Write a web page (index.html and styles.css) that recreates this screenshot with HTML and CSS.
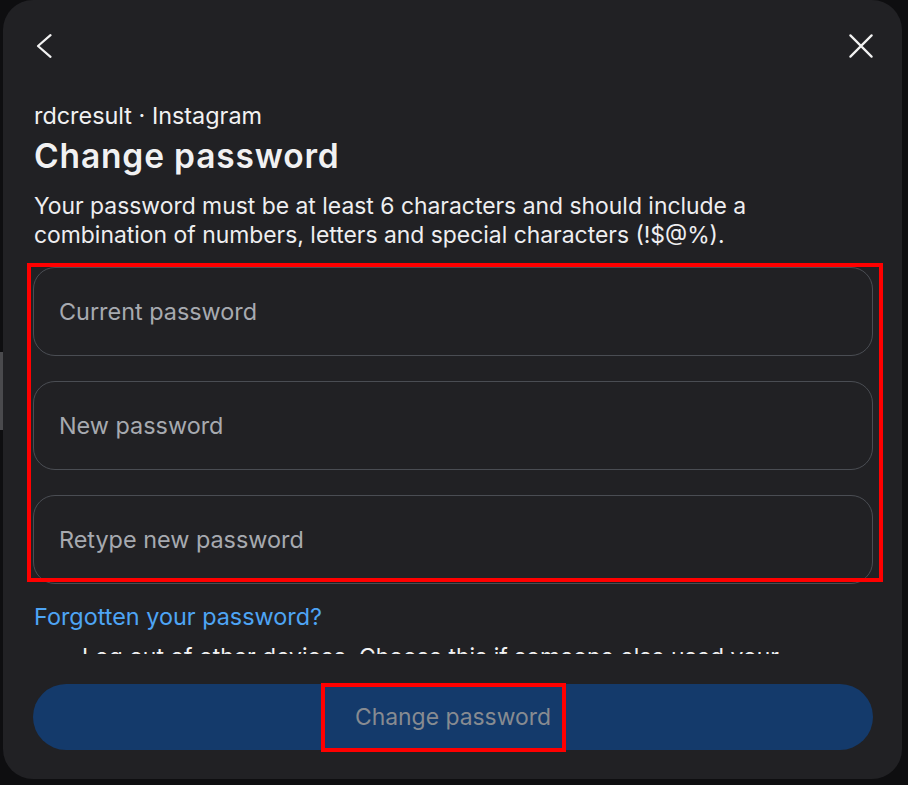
FILE: index.html
```html
<!DOCTYPE html>
<html lang="en">
<head>
<meta charset="utf-8">
<title>Change password</title>
<link rel="stylesheet" href="styles.css">
</head>
<body>
<div class="backdrop">
  <div class="scrollbar"></div>
  <div class="modal">
    <div class="header">
      <button class="icon-btn" aria-label="Back">
        <svg width="24" height="24" viewBox="0 0 24 24"><path d="M15.5 1.2 L3 12 L15.5 22.8" fill="none" stroke="#f2f2f2" stroke-width="2.2" stroke-linecap="round" stroke-linejoin="round"/></svg>
      </button>
      <button class="icon-btn" aria-label="Close">
        <svg width="24" height="24" viewBox="0 0 24 24"><path d="M1.4 1.4 L22.6 22.6 M22.6 1.4 L1.4 22.6" fill="none" stroke="#f2f2f2" stroke-width="2.2" stroke-linecap="round"/></svg>
      </button>
    </div>
    <div class="body">
      <div class="account">rdcresult · Instagram</div>
      <h1 class="title">Change password</h1>
      <p class="desc">Your password must be at least 6 characters and should include a combination of numbers, letters and special characters (!$@%).</p>
      <div class="fields">
        <div class="field">Current password</div>
        <div class="field">New password</div>
        <div class="field">Retype new password</div>
        <div class="highlight fields-hl"></div>
      </div>
      <a class="forgot">Forgotten your password?</a>
      <div class="logout">Log out of other devices. Choose this if someone else used your account.</div>
    </div>
    <div class="footer">
      <button class="submit"><span class="submit-label">Change password</span></button>
    </div>
  </div>
</div>
</body>
</html>
```

FILE: styles.css
```css
html, body {
  margin: 0;
  padding: 0;
  background: #0e0e10;
  width: 908px;
  height: 785px;
  overflow: hidden;
  font-family: Inter, "Noto Sans", "Liberation Sans", sans-serif;
}

.backdrop {
  position: relative;
  width: 908px;
  height: 785px;
  padding-left: 3px;
  box-sizing: border-box;
}

.scrollbar {
  position: absolute;
  left: 0;
  top: 352px;
  width: 3px;
  height: 78px;
  background: #4a4a4d;
}

.modal {
  width: 899px;
  height: 779px;
  background: #212124;
  border-radius: 30px;
  display: flex;
  flex-direction: column;
  box-sizing: border-box;
}

.header {
  height: 92px;
  display: flex;
  justify-content: space-between;
  align-items: center;
  padding: 0 29px 0 32px;
  flex-shrink: 0;
}

.icon-btn {
  background: none;
  border: none;
  padding: 0;
  width: 24px;
  height: 24px;
  display: flex;
  cursor: pointer;
}

.body {
  flex: 1;
  overflow: hidden;
  padding: 0 29px 0 30px;
  color: #f1f1f2;
  font-size: 23.4px;
}

.account {
  line-height: 28px;
  padding-left: 1px;
  margin-top: 10px;
}

.title {
  font-size: 33.5px;
  line-height: 40px;
  font-weight: 600;
  margin: 6px 0 0 1px;
  letter-spacing: 0.85px;
}

.desc {
  font-size: 22.9px;
  line-height: 29px;
  margin: 16px 60px 0 1px;
  color: #eeeef0;
}

.fields {
  position: relative;
  margin-top: 17px;
  display: flex;
  flex-direction: column;
  gap: 25px;
}

.field {
  height: 89px;
  box-sizing: border-box;
  border: 1px solid #4a4d53;
  border-radius: 22px;
  padding: 0 25px;
  display: flex;
  align-items: center;
  color: #a7aab0;
}

.highlight {
  position: absolute;
  border: 4px solid #ff0000;
  box-sizing: border-box;
  pointer-events: none;
}

.fields-hl {
  left: -6px;
  right: -10px;
  top: -4px;
  bottom: 2px;
}

.forgot {
  display: block;
  margin-top: 19px;
  margin-left: 1px;
  line-height: 28px;
  color: #4ea5f5;
}

.logout {
  font-size: 22.9px;
  margin-top: 12px;
  margin-left: 49px;
  line-height: 28px;
  color: #f1f1f2;
}

.footer {
  flex-shrink: 0;
  height: 125px;
  padding: 30px 29px 0 30px;
  box-sizing: border-box;
}

.submit {
  width: 100%;
  height: 66px;
  border: none;
  border-radius: 33px;
  background: #143a6b;
  display: flex;
  align-items: center;
  justify-content: center;
  font-family: inherit;
  font-size: 22.9px;
  color: #878b91;
  padding: 0;
}

.submit-label {
  position: relative;
  line-height: 28px;
}

.submit-label::after {
  content: "";
  position: absolute;
  left: -34px;
  right: -15px;
  top: -20px;
  bottom: -21px;
  border: 4px solid #ff0000;
}
```
